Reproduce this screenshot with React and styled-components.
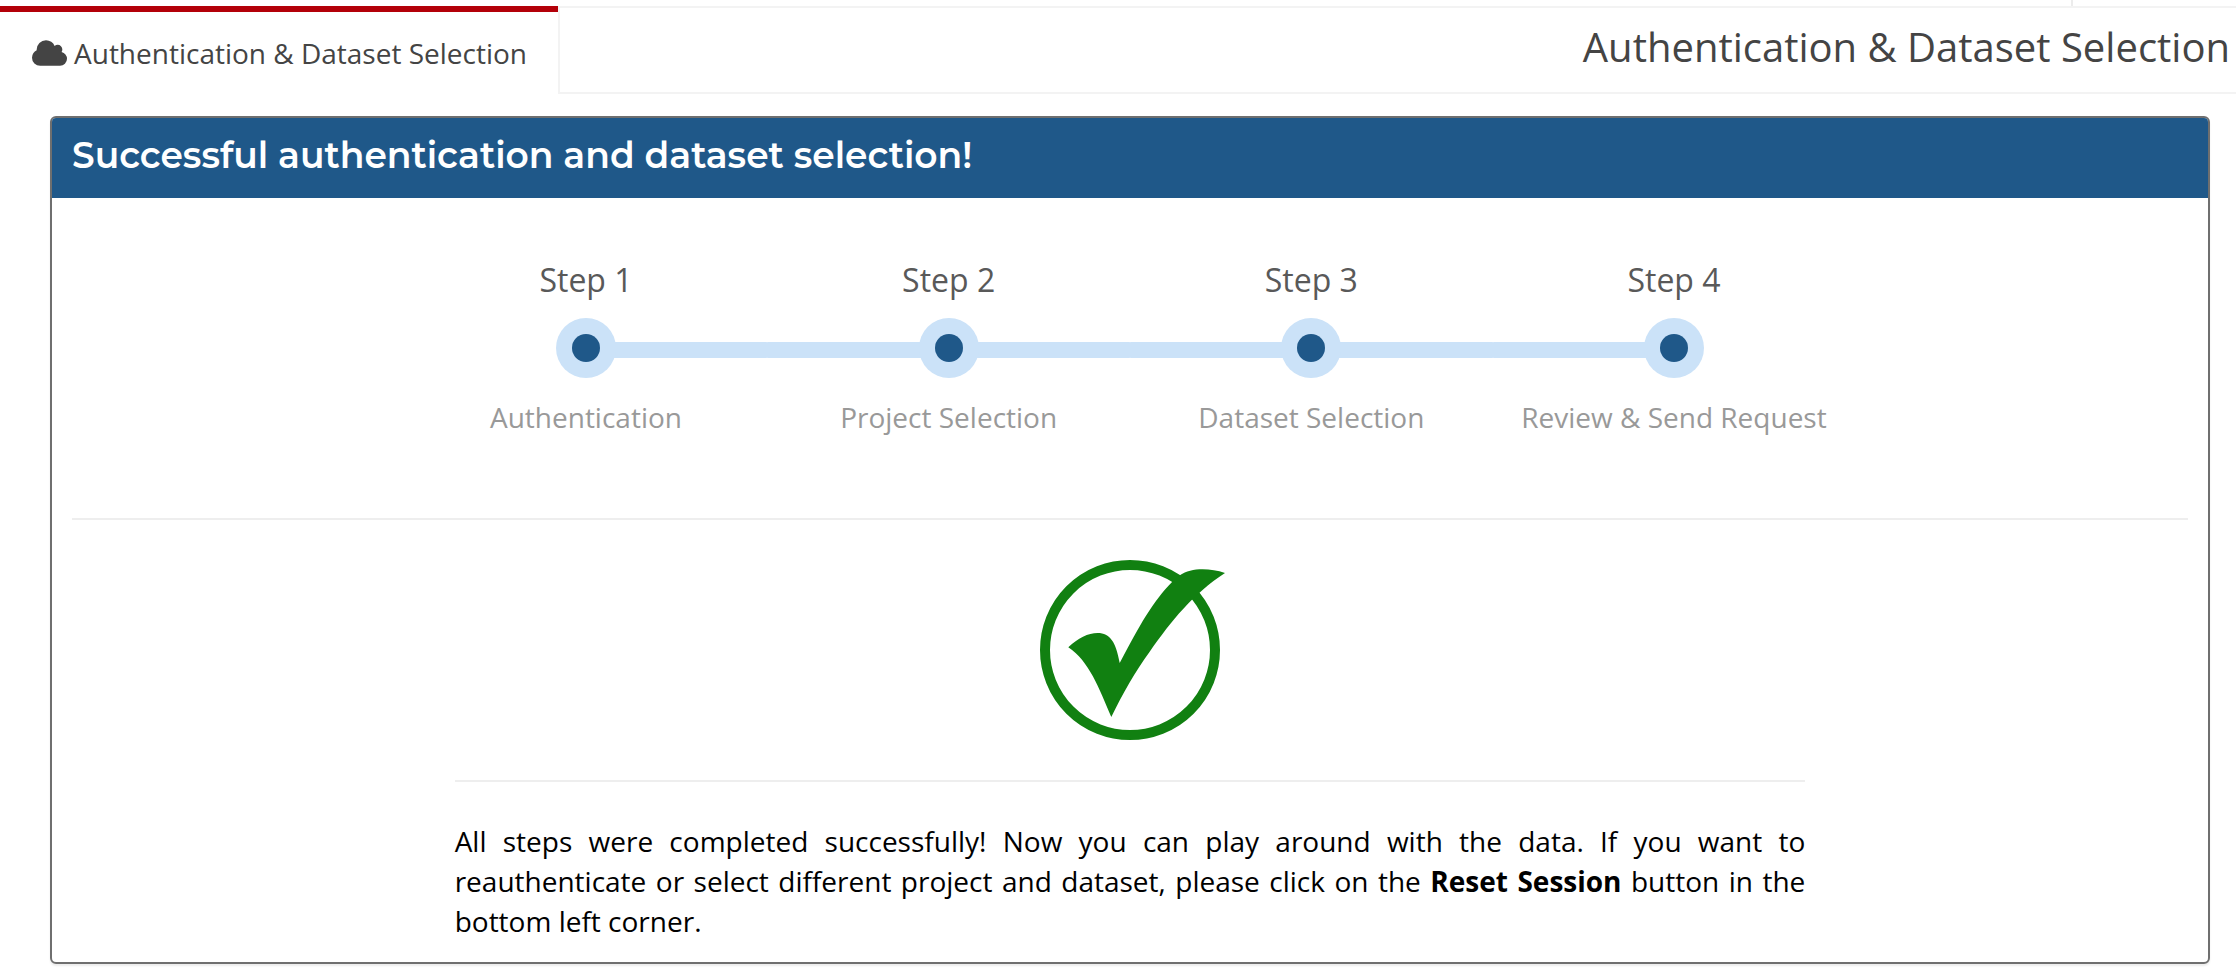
import React from "react";
import styled, { createGlobalStyle } from "styled-components";

const GlobalStyle = createGlobalStyle`
  *, *::before, *::after { box-sizing: border-box; }
  body {
    margin: 0;
    background: #fff;
    color: #000;
    font-family: "Open Sans", "Noto Sans", sans-serif;
    font-size: 28px;
    line-height: 40px;
  }
`;

const TopStrip = styled.div`
  display: flex;
  justify-content: flex-end;
  height: 6px;
`;

const StripCell = styled.div`
  width: 165px;
  border-left: 2px solid #ececec;
`;

const TabBar = styled.header`
  display: flex;
  height: 88px;
`;

const Tab = styled.a`
  display: flex;
  align-items: center;
  gap: 7px;
  padding: 6px 31px 0 32px;
  border-right: 2px solid #f3f3f3;
  box-shadow: inset 0 6px #b30009;
  color: #444;
  text-decoration: none;
  white-space: nowrap;
`;

const TabRest = styled.div`
  display: flex;
  flex: 1;
  justify-content: flex-end;
  padding: 11px 6px 0;
  border-top: 2px solid #f3f3f3;
  border-bottom: 2px solid #f3f3f3;
`;

const PageTitle = styled.h1`
  margin: 0;
  color: #444;
  font-size: 40px;
  font-weight: 400;
  line-height: 56px;
`;

const Panel = styled.section`
  margin: 22px 26px 16px 50px;
  border: 2px solid #6f6f6f;
  border-radius: 6px;
  box-shadow: 0 2px 2px rgba(0, 0, 0, 0.08);
  overflow: hidden;
`;

const PanelHeading = styled.h2`
  margin: 0;
  padding: 13px 20px 19px;
  background: #1f5889;
  color: #fff;
  font-family: Montserrat, Inter, sans-serif;
  font-size: 36px;
  font-weight: 600;
  line-height: 48px;
`;

const PanelBody = styled.div`
  padding: 59px 20px 21px;
`;

const Columns = styled.div`
  display: grid;
  grid-template-columns: repeat(6, 1fr);
  margin: 0 -30px;
`;

const Steps = styled.ol`
  display: grid;
  grid-column: 2 / 6;
  grid-template-columns: repeat(4, 1fr);
  margin: 0;
  padding: 0;
  list-style: none;
`;

const Step = styled.li`
  display: flex;
  flex-direction: column;
  align-items: center;
`;

const StepName = styled.div`
  margin-bottom: 15px;
  color: #595959;
  font-size: 32px;
  line-height: 46px;
`;

const StepTrack = styled.div`
  display: grid;
  grid-template-columns: 1fr 1fr;
  align-items: center;
  width: 100%;
  height: 60px;
  margin-bottom: 19px;
`;

const Bar = styled.div`
  grid-row: 1;
  grid-column: ${({ $from }) => $from} / ${({ $to }) => $to};
  height: 16px;
  margin: 4px -1px 0;
  border-radius: 2px;
  background: #cbe2f8;
`;

const Marker = styled.div`
  display: grid;
  grid-row: 1;
  grid-column: 1 / 3;
  place-items: center;
  justify-self: center;
  width: 60px;
  height: 60px;
  border-radius: 50%;
  background: #cbe2f8;
`;

const Dot = styled.div`
  width: 28px;
  height: 28px;
  border-radius: 50%;
  background: #1f5889;
`;

const StepInfo = styled.div`
  color: #999;
  white-space: nowrap;
`;

const Rule = styled.hr`
  width: 100%;
  height: 2px;
  margin: ${({ $top }) => $top}px 0 ${({ $bottom }) => $bottom}px;
  border: 0;
  background: #eee;
`;

const Result = styled.div`
  grid-column: 2 / 6;
  padding: 0 50px;
`;

const CheckMark = styled.svg`
  display: block;
  width: 180px;
  height: 180px;
  margin: 0 auto;
  overflow: visible;
`;

const Message = styled.p`
  margin: 0;
  text-align: justify;
`;

const steps = [
  { name: "Step 1", info: "Authentication" },
  { name: "Step 2", info: "Project Selection" },
  { name: "Step 3", info: "Dataset Selection" },
  { name: "Step 4", info: "Review & Send Request" },
];

function CloudIcon() {
  return (
    <svg width="35" height="26" viewBox="0 128 1920 1408" fill="currentColor" aria-hidden="true">
      <path d="M1920 1152q0 159-112.5 271.5t-271.5 112.5h-1088q-185 0-316.5-131.5t-131.5-316.5q0-132 71-241.5t187-163.5q-2-28-2-43 0-212 150-362t362-150q158 0 286.5 88t187.5 230q70-62 166-62 106 0 181 75t75 181q0 75-41 138 129 30 213 134.5t84 239.5z" />
    </svg>
  );
}

export default function App() {
  const last = steps.length - 1;
  return (
    <>
      <GlobalStyle />
      <TopStrip>
        <StripCell />
      </TopStrip>
      <TabBar>
        <Tab href="#authentication">
          <CloudIcon />
          Authentication &amp; Dataset Selection
        </Tab>
        <TabRest>
          <PageTitle>Authentication &amp; Dataset Selection</PageTitle>
        </TabRest>
      </TabBar>
      <Panel>
        <PanelHeading>Successful authentication and dataset selection!</PanelHeading>
        <PanelBody>
          <Columns>
            <Steps>
              {steps.map((step, i) => (
                <Step key={step.name}>
                  <StepName>{step.name}</StepName>
                  <StepTrack>
                    <Bar $from={i === 0 ? 2 : 1} $to={i === last ? 2 : 3} />
                    <Marker>
                      <Dot />
                    </Marker>
                  </StepTrack>
                  <StepInfo>{step.info}</StepInfo>
                </Step>
              ))}
            </Steps>
          </Columns>
          <Rule $top={81} $bottom={40} />
          <Columns>
            <Result>
              <CheckMark viewBox="0 0 180 180" role="img" aria-label="Completed">
                <circle cx="90" cy="90" r="85" fill="none" stroke="#118011" strokeWidth="10" />
                <path
                  fill="#118011"
                  d="M28.3 87.3C38 78 48 73 57.7 73C70 73 76 82 79.7 103C99 66 113 41 132.3 21.7L140.3 15C150 8 169 7.5 185 13C153 34 132 60 109.5 92C95 112 83 133 71.3 157C59 128 49 101 28.3 87.3Z"
                />
              </CheckMark>
              <Rule $top={40} $bottom={39} />
              <Message>
                All steps were completed successfully! Now you can play around with the data. If you want to
                reauthenticate or select different project and dataset, please click on the{" "}
                <strong>Reset Session</strong> button in the bottom left corner.
              </Message>
            </Result>
          </Columns>
        </PanelBody>
      </Panel>
    </>
  );
}
